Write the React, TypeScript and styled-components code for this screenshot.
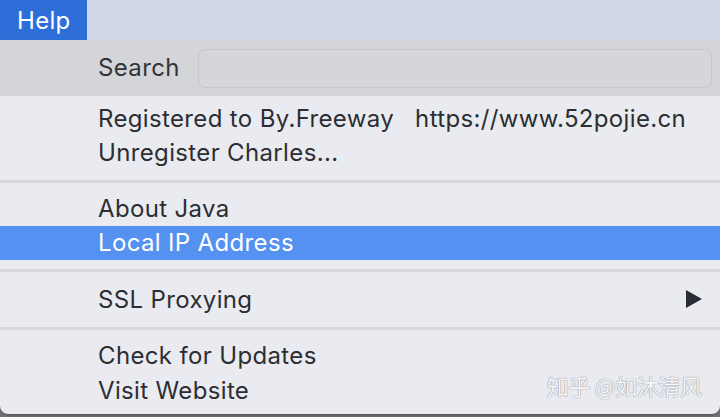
import React from "react";
import styled, { createGlobalStyle } from "styled-components";

const Global = createGlobalStyle`
  html, body { margin: 0; padding: 0; }
  body {
    width: 720px;
    height: 417px;
    overflow: hidden;
    background: #8e9096;
    font-family: Inter, "Liberation Sans", Arial, sans-serif;
  }
`;

const Screen = styled.div`
  width: 720px;
  height: 417px;
  display: flex;
  flex-direction: column;
  position: relative;
  overflow: hidden;
  background: linear-gradient(#a9abb0, #6f7176);
`;

const MenuBar = styled.div`
  height: 40px;
  display: flex;
  background: #d2d8e9;
`;

const MenuTitle = styled.div`
  width: 87px;
  display: flex;
  align-items: center;
  padding-left: 17px;
  box-sizing: border-box;
  background: #2e6ed8;
  color: #ffffff;
  font-size: 24px;
  letter-spacing: 0.3px;
`;

const Menu = styled.div`
  height: 374px;
  display: flex;
  flex-direction: column;
  background: #e9ebf1;
  border-radius: 0 0 8px 8px;
  box-shadow: 0 1px 2px rgba(0, 0, 0, 0.35);
  position: relative;
`;

const SearchRow = styled.div`
  height: 56px;
  display: flex;
  align-items: center;
  gap: 18px;
  padding: 0 8px 2px 98px;
  box-sizing: border-box;
  background: #d4d5d9;
  margin-bottom: 5px;
`;

const SearchLabel = styled.span`
  font-size: 24px;
  color: #333438;
  letter-spacing: 0.35px;
`;

const SearchField = styled.div`
  flex: 1;
  height: 39px;
  margin-top: 2px;
  box-sizing: border-box;
  border: 1px solid #c6c7cc;
  border-radius: 7px;
  background: #d5d6da;
`;

const Item = styled.div<{ $active?: boolean }>`
  height: 34.5px;
  display: flex;
  align-items: center;
  padding: 0 20px 0 98px;
  font-size: 24px;
  letter-spacing: 0.35px;
  color: ${(p) => (p.$active ? "#ffffff" : "#2d2e32")};
  background: ${(p) => (p.$active ? "#5591f1" : "transparent")};
`;

const Label = styled.span`
  flex: 1;
  white-space: nowrap;
`;

const Url = styled.span`
  margin-left: 21px;
`;

const Separator = styled.div<{ $top: number; $bottom: number }>`
  height: 3px;
  background: #d6d8de;
  margin: ${(p) => p.$top}px 0 ${(p) => p.$bottom}px;
`;

const Arrow = styled.svg`
  width: 17px;
  height: 18px;
  margin-right: -2px;
`;

const Watermark = styled.div`
  position: absolute;
  right: 18px;
  bottom: 13px;
  font-family: "Noto Sans CJK SC", "Liberation Sans", sans-serif;
  font-size: 22px;
  color: #f6f7fa;
  text-shadow: 0 0 1px #8d8f95, 0 0 1px #8d8f95;
  letter-spacing: -0.3px;
`;

export default function App() {
  return (
    <>
      <Global />
      <Screen>
        <MenuBar>
          <MenuTitle>Help</MenuTitle>
        </MenuBar>
        <Menu>
          <SearchRow>
            <SearchLabel>Search</SearchLabel>
            <SearchField />
          </SearchRow>
          <Item>
            <Label>
              Registered to By.Freeway<Url>https://www.52pojie.cn</Url>
            </Label>
          </Item>
          <Item>
            <Label>Unregister Charles...</Label>
          </Item>
          <Separator $top={10} $bottom={8} />
          <Item>
            <Label>About Java</Label>
          </Item>
          <Item $active>
            <Label>Local IP Address</Label>
          </Item>
          <Separator $top={9} $bottom={10} />
          <Item>
            <Label>SSL Proxying</Label>
            <Arrow viewBox="0 0 17 18">
              <path d="M1 0 L17 9 L1 18 Z" fill="#2a2c33" />
            </Arrow>
          </Item>
          <Separator $top={10} $bottom={9} />
          <Item>
            <Label>Check for Updates</Label>
          </Item>
          <Item>
            <Label>Visit Website</Label>
          </Item>
          <Watermark>知乎 @如沐清风</Watermark>
        </Menu>
      </Screen>
    </>
  );
}
